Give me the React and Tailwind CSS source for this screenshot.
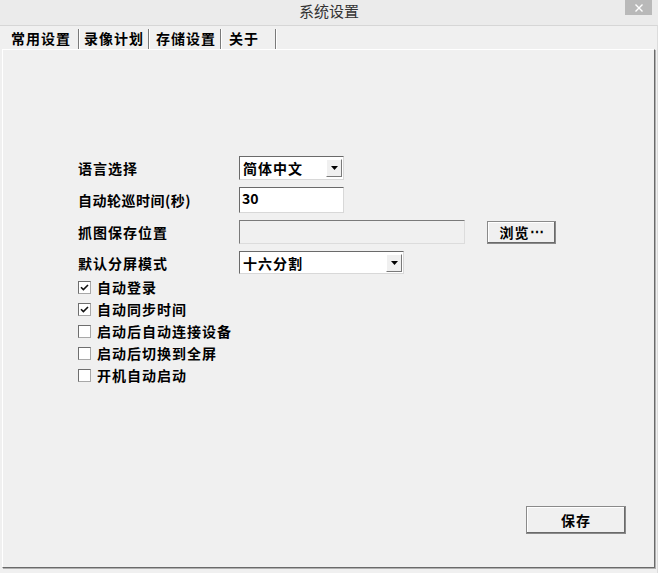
import { useState } from 'react'

const font = "font-['Noto_Sans_CJK_SC','Noto_Sans',sans-serif]"

function Check({ checked, label, onToggle }) {
  return (
    <div className="h-[22px] flex items-center cursor-default" onClick={onToggle}>
      <span className="w-[13px] h-[13px] border border-t-[#6e6e6e] border-l-[#6e6e6e] border-b-[#a8a8a8] border-r-[#a8a8a8] bg-white flex items-center justify-center">
        {checked && (
          <svg width="9" height="9" viewBox="0 0 9 9">
            <path d="M1 4.2 L3.4 6.6 L8 2" fill="none" stroke="#111" strokeWidth="1.6" />
          </svg>
        )}
      </span>
      <span className="ml-[6px] text-[14px] font-bold tracking-[1px] text-black leading-none">{label}</span>
    </div>
  )
}

function Select({ value, width }) {
  return (
    <div className={`${width} h-full flex items-center bg-white border border-t-[#6a6a6a] border-l-[#6a6a6a] border-b-[#d8d8d8] border-r-[#d8d8d8]`}>
      <span className="flex-1 pl-[3px] text-[14px] font-bold tracking-[1px] text-black leading-none">{value}</span>
      <span className="w-[16px] h-[18px] mr-[1px] bg-[#f0f0f0] border border-t-white border-l-white border-b-[#7a7a7a] border-r-[#7a7a7a] flex items-center justify-center">
        <svg width="7" height="4" viewBox="0 0 7 4">
          <path d="M0 0 H7 L3.5 4 Z" fill="#000" />
        </svg>
      </span>
    </div>
  )
}

function Button({ children, className }) {
  return (
    <button className={`${className} bg-[#f0f0f0] border border-[#8a8a8a] shadow-[inset_-1px_-1px_0_#6a6a6a,inset_1px_1px_0_#fff] text-[14px] font-bold tracking-[1px] text-black leading-none flex items-center justify-center whitespace-nowrap`}>
      {children}
    </button>
  )
}

export default function App() {
  const [checks, setChecks] = useState([true, true, false, false, false])
  const labels = ['自动登录', '自动同步时间', '启动后自动连接设备', '启动后切换到全屏', '开机自动启动']
  const tabs = [
    { name: '常用设置', w: 'w-[77px] pl-[9px]' },
    { name: '录像计划', w: 'w-[70px] pl-[5px]' },
    { name: '存储设置', w: 'w-[72px] pl-[7px]' },
    { name: '关于', w: 'w-[55px] pl-[8px]' },
  ]

  const toggle = (i) => setChecks(checks.map((c, j) => (j === i ? !c : c)))

  return (
    <div className={`${font} w-[658px] h-[573px] bg-[#f0f0f0] flex flex-col overflow-hidden`}>
      <div className="h-[25px] bg-[#ebebeb] grid grid-cols-[1fr_auto_1fr] shrink-0">
        <div />
        <div className="text-[15px] text-[#333] leading-[22px] font-normal">系统设置</div>
        <div className="flex justify-end pr-[6px]">
          <div className="w-[27px] h-[15px] bg-[#b9b9b9] flex items-center justify-center">
            <svg width="8" height="8" viewBox="0 0 8 8">
              <path d="M0.5 0.5 L7.5 7.5 M7.5 0.5 L0.5 7.5" stroke="#fff" strokeWidth="1.4" />
            </svg>
          </div>
        </div>
      </div>
      <div className="flex-1 flex flex-col border-t border-[#d6d6d6] border-r border-r-[#dcdcdc] pl-[2px] pr-[2px] pb-[5px]">
        <div className="h-[23px] flex items-end shrink-0">
          {tabs.map((t) => (
            <div
              key={t.name}
              className={`${t.w} h-[20px] flex items-center border-r border-[#7a7a7a] shadow-[1px_0_0_#fff] text-[14px] font-bold tracking-[1px] text-black leading-none pb-[3px]`}
            >
              {t.name}
            </div>
          ))}
        </div>
        <div className="flex-1 flex flex-col bg-[#f0f0f0] border-t border-l border-white border-r border-b border-r-[#6a6a6a] border-b-[#6a6a6a] shadow-[1px_1px_0_#b0b0b0] pl-[75px]">
          <div className="mt-[106px] h-[24px] flex items-center">
            <span className="w-[161px] text-[14px] font-bold tracking-[1px] leading-none">语言选择</span>
            <Select value="简体中文" width="w-[105px]" />
          </div>
          <div className="mt-[7px] h-[26px] flex items-center">
            <span className="w-[161px] text-[14px] font-bold tracking-[0.5px] leading-none">自动轮巡时间(秒)</span>
            <div className="w-[105px] h-full bg-white border border-t-[#6a6a6a] border-l-[#6a6a6a] border-b-[#d8d8d8] border-r-[#d8d8d8] pl-[2px] pt-[3px] text-[14px] font-bold leading-none">
              30
            </div>
          </div>
          <div className="mt-[7px] h-[24px] flex items-center">
            <span className="w-[161px] text-[14px] font-bold tracking-[1px] leading-none">抓图保存位置</span>
            <div className="w-[226px] h-full bg-[#f0f0f0] border border-t-[#7a7a7a] border-l-[#7a7a7a] border-b-[#dcdcdc] border-r-[#dcdcdc]" />
            <Button className="ml-[22px] w-[69px] h-[23px]">
              浏览<span className="tracking-normal font-['Liberation_Sans',sans-serif]">⋯</span>
            </Button>
          </div>
          <div className="mt-[7px] h-[23px] flex items-center">
            <span className="w-[161px] text-[14px] font-bold tracking-[1px] leading-none">默认分屏模式</span>
            <Select value="十六分割" width="w-[165px]" />
          </div>
          <div className="mt-[2px] flex flex-col">
            {labels.map((l, i) => (
              <Check key={l} label={l} checked={checks[i]} onToggle={() => toggle(i)} />
            ))}
          </div>
          <div className="mt-auto flex justify-end pr-[28px] pb-[33px]">
            <Button className="w-[100px] h-[28px]">保存</Button>
          </div>
        </div>
      </div>
    </div>
  )
}
